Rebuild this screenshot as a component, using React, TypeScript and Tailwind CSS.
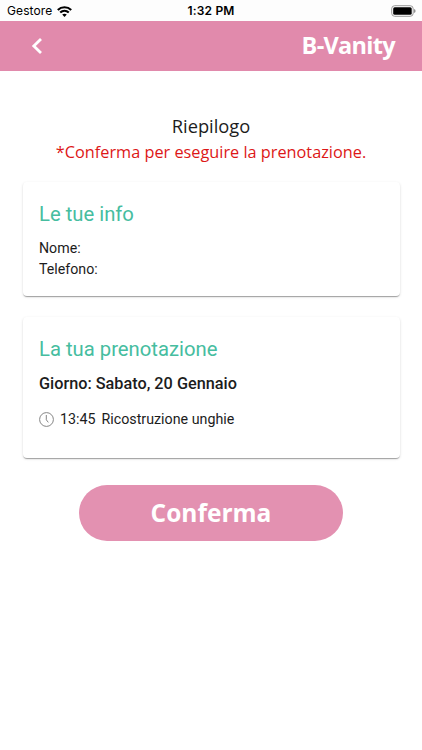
import React from "react";

const Card = ({ title, className, children }: any) => {
    return (
        <div
            className={`mx-[22.5px] rounded-[4px] bg-white px-[16.5px] shadow-[0_2px_1px_-1px_rgba(0,0,0,0.2),0_1px_1px_0_rgba(0,0,0,0.14),0_1px_3px_0_rgba(0,0,0,0.12)] ${className}`}
        >
            <h2 className="text-[20.25px] leading-6 text-[#46bda0]">{title}</h2>
            {children}
        </div>
    );
};

export default () => {
    return (
        <div className="flex flex-col w-full h-screen bg-white font-['Roboto',sans-serif] text-[#1c1c1c]">
            <div className="flex items-center justify-between h-[21px] bg-[#fdfdfd] px-[7px] pt-px font-['Inter',sans-serif] text-black">
                <div className="flex w-[120px] items-center gap-[5px] text-[12px]">
                    <span className="tracking-[0.1px]">Gestore</span>
                    <svg width="15" height="11" viewBox="0 0 15 11" fill="none" stroke="black">
                        <path d="M.8 4C4.500.3 10.500.3 14.200 4M3.200 6.600c2.500-2.400 6.100-2.400 8.600 0" strokeWidth="2.100" />
                        <path d="M5.200 8.600c1.300-1.200 3.300-1.200 4.600 0L7.500 10.900z" fill="black" stroke="none" />
                    </svg>
                </div>
                <span className="text-[12px] font-semibold tracking-[0.2px]">1:32 PM</span>
                <div className="flex w-[120px] justify-end">
                    <svg width="25" height="12" viewBox="0 0 25 12" className="-mr-px">
                        <rect x=".7" y=".7" width="21.500" height="10.600" rx="3" fill="none" stroke="#999" />
                        <rect x="2.200" y="2.200" width="18.500" height="7.600" rx="1.500" />
                        <path d="M23.200 4v4q1.300-.6 1.300-2T23.200 4" fill="#777" />
                    </svg>
                </div>
            </div>

            <div className="flex items-center justify-between h-[50px] bg-[#e18aac] pl-[31px] pr-[27px] text-white">
                <svg width="12" height="18" viewBox="0 0 12 18" fill="none" stroke="white" strokeWidth="2.800">
                    <path d="M10 2 2.800 9l7.200 7" />
                </svg>
                <span className="font-['Open_Sans',sans-serif] text-[23.500px] font-bold tracking-[-0.7px]">B-Vanity</span>
            </div>

            <div className="mt-[43px] flex flex-col items-center font-['Open_Sans',sans-serif]">
                <div className="text-[18.3px] leading-6">Riepilogo</div>
                <div className="mt-[2px] text-[16.3px] leading-6 text-[#dd1717]">*Conferma per eseguire la prenotazione.</div>
            </div>

            <Card title="Le tue info" className="mt-[18px] h-[114px] pt-5">
                <div className="mt-[12px] text-[14.2px] leading-[21px]">
                    <div>Nome:</div>
                    <div>Telefono:</div>
                </div>
            </Card>

            <Card title="La tua prenotazione" className="mt-[21px] h-[141px] pt-5">
                <div className="mt-[11px] text-[16.25px] leading-6 font-medium">Giorno: Sabato, 20 Gennaio</div>
                <div className="mt-[13px] flex items-center text-[14.25px] leading-[21px]">
                    <svg width="15" height="15" viewBox="0 0 15 15" fill="none" stroke="#858585">
                        <circle cx="7.5" cy="7.5" r="6.9" />
                        <path d="M7.300 3v4.800l2 2.600" />
                    </svg>
                    <span className="ml-[6px]">13:45</span>
                    <span className="ml-[6px]">Ricostruzione unghie</span>
                </div>
            </Card>

            <button className="mx-auto mt-[27px] h-[56px] w-[264px] rounded-full bg-[#e391b1] pt-px font-['Open_Sans',sans-serif] text-[24.5px] font-bold text-white">
                Conferma
            </button>
        </div>
    );
};
